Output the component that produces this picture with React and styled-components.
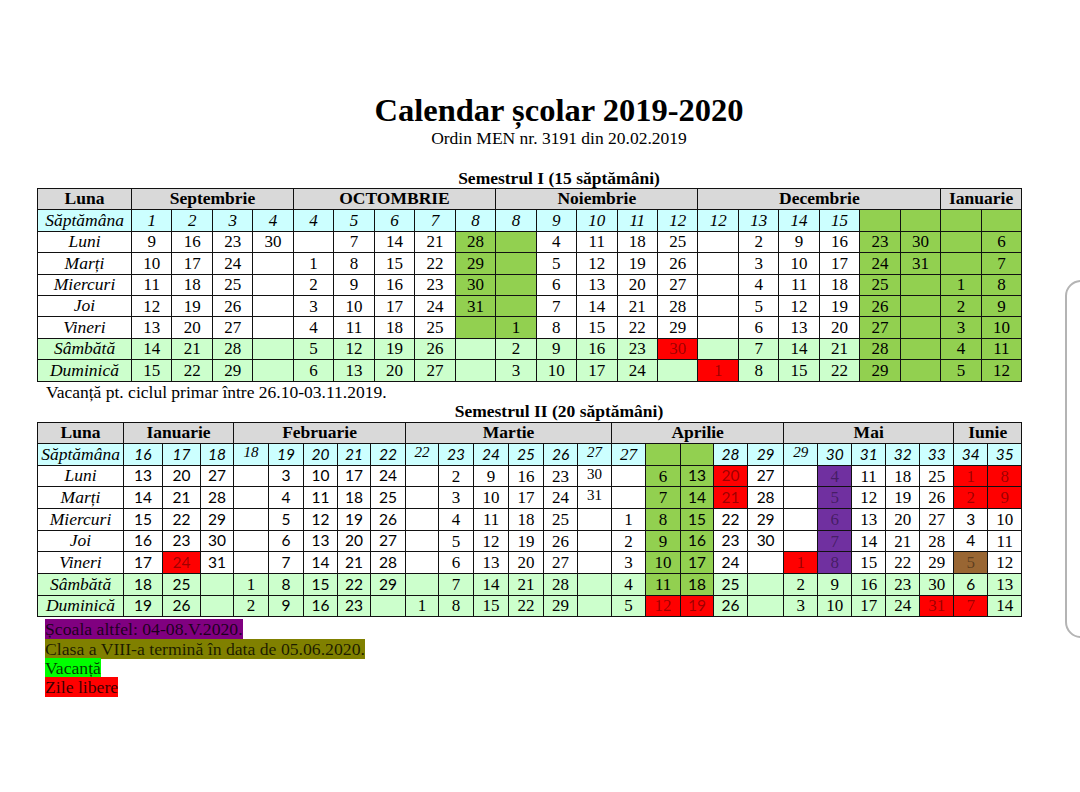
import React from "react";
import styled, { createGlobalStyle } from "styled-components";

const GREEN = "#92d050";
const RED = "#ff0000";
const PURPLE = "#7030a0";
const BROWN = "#996633";
const WEEKEND = "#ccffcc";
const CYAN = "#ccffff";
const GREY = "#d9d9d9";

const GlobalStyle = createGlobalStyle`
  html, body {
    margin: 0;
    background: #ffffff;
    overflow: hidden;
  }
  body {
    font-family: "Liberation Serif", "Times New Roman", serif;
    color: #000;
  }
`;

const Page = styled.div`
  position: relative;
  width: 1080px;
  height: 792px;
  padding: 93px 0 0 37px;
  box-sizing: border-box;
`;

const Heading = styled.div`
  width: 984px;
  padding-left: 60px;
  box-sizing: border-box;
  text-align: center;
`;

const Title = styled.h1`
  margin: 0;
  font-size: 32.5px;
  line-height: 35px;
  font-weight: bold;
`;

const Subtitle = styled.div`
  font-size: 17.5px;
  line-height: 20px;
`;

const SemesterTitle = styled.div`
  margin-top: ${(p) => p.$gap}px;
  font-size: 17.5px;
  line-height: 19px;
  font-weight: bold;
`;

const Table = styled.table`
  width: 984px;
  border-collapse: collapse;
  table-layout: fixed;
  margin-top: ${(p) => p.$gap || 0}px;
`;

const Row = styled.tr`
  height: ${(p) => p.$h}px;
`;

const Cell = styled.td`
  border: 1px solid #111;
  padding: ${(p) => (p.$top ? "1px 0 0" : "0")};
  text-align: center;
  vertical-align: ${(p) => (p.$top ? "top" : "middle")};
  background: ${(p) => p.$bg};
  color: ${(p) => (p.$dim ? "rgba(0, 0, 0, 0.4)" : "#000")};
  font-family: ${(p) =>
    p.$sans ? '"Lato", "Liberation Sans", sans-serif' : '"Liberation Serif", serif'};
  font-size: ${(p) => (p.$sans ? "15.5px" : p.$top ? "15px" : "17px")};
  font-style: ${(p) => (p.$italic ? "italic" : "normal")};
  line-height: 1;
  white-space: nowrap;
`;

const HeadCell = styled.th`
  border: 1px solid #111;
  padding: 0;
  background: ${GREY};
  font-size: 17.5px;
  font-weight: bold;
  line-height: 1;
  text-align: center;
`;

const DayCell = styled.td`
  border: 1px solid #111;
  padding: 0;
  background: ${(p) => p.$bg};
  font-size: 17.5px;
  font-style: italic;
  line-height: 1;
  text-align: center;
`;

const Note = styled.div`
  padding-left: 9px;
  font-size: 17.5px;
  line-height: 20px;
`;

const Legend = styled.div`
  margin-top: 3px;
  padding-left: 8px;
`;

const LegendLine = styled.div`
  font-size: 17.7px;
  line-height: 19.3px;
`;

const Mark = styled.span`
  background: ${(p) => p.$bg};
  color: rgba(0, 0, 0, 0.78);
`;

const ScrollEdge = styled.div`
  position: absolute;
  left: 1065px;
  top: 280px;
  width: 40px;
  height: 354px;
  border: 2px solid #b4b4b4;
  border-radius: 16px;
`;

const DAYS = ["Luni", "Marți", "Miercuri", "Joi", "Vineri", "Sâmbătă", "Duminică"];

const seq = (start, flags = "") =>
  Array.from({ length: 7 }, (_, i) => `${start + i}${flags}`);

const parse = (s) => {
  const m = s.match(/^(\d*)([a-z]*)$/);
  return { v: m[1], f: m[2] };
};

const cellBg = (f, row) => {
  if (f.includes("g")) return GREEN;
  if (f.includes("r")) return RED;
  if (f.includes("p")) return PURPLE;
  if (f.includes("b")) return BROWN;
  return row >= 5 ? WEEKEND : "#ffffff";
};

const semester1 = {
  months: [
    ["Septembrie", 4],
    ["OCTOMBRIE", 5],
    ["Noiembrie", 5],
    ["Decembrie", 6],
    ["Ianuarie", 2],
  ],
  first: 94,
  widths: Array(22).fill(890 / 22),
  rowH: 21.4,
  cols: [
    { w: "1", d: seq(9) },
    { w: "2", d: seq(16) },
    { w: "3", d: seq(23) },
    { w: "4", d: ["30", "", "", "", "", "", ""] },
    { w: "4", d: ["", "1", "2", "3", "4", "5", "6"] },
    { w: "5", d: seq(7) },
    { w: "6", d: seq(14) },
    { w: "7", d: seq(21) },
    { w: "8", d: ["28g", "29g", "30g", "31g", "g", "", ""] },
    { w: "8", d: ["g", "g", "g", "g", "1g", "2", "3"] },
    { w: "9", d: seq(4) },
    { w: "10", d: seq(11) },
    { w: "11", d: seq(18) },
    { w: "12", d: ["25", "26", "27", "28", "29", "30r", ""] },
    { w: "12", d: ["", "", "", "", "", "", "1r"] },
    { w: "13", d: seq(2) },
    { w: "14", d: seq(9) },
    { w: "15", d: seq(16) },
    { w: "g", d: seq(23, "g") },
    { w: "g", d: ["30g", "31g", "g", "g", "g", "g", "g"] },
    { w: "g", d: ["g", "g", "1g", "2g", "3g", "4g", "5g"] },
    { w: "g", d: seq(6, "g") },
  ],
};

const semester2 = {
  months: [
    ["Ianuarie", 3],
    ["Februarie", 5],
    ["Martie", 6],
    ["Aprilie", 5],
    ["Mai", 5],
    ["Iunie", 2],
  ],
  first: 86,
  widths: [39, 38, 33, 35, 35, 34, 33, 35, 33, 35, 35, 35, 34, 34, 34, 35, 33, 34, 36, 34, 34, 34, 34, 34, 34, 34],
  rowH: 21.65,
  cols: [
    { w: "16s", d: seq(13, "s") },
    { w: "17s", d: ["20s", "21s", "22s", "23s", "24rs", "25s", "26s"] },
    { w: "18s", d: ["27s", "28s", "29s", "30s", "31s", "", ""] },
    { w: "18t", d: ["", "", "", "", "", "1", "2"] },
    { w: "19s", d: seq(3, "s") },
    { w: "20s", d: seq(10, "s") },
    { w: "21s", d: seq(17, "s") },
    { w: "22s", d: ["24s", "25s", "26s", "27s", "28s", "29s", ""] },
    { w: "22t", d: ["", "", "", "", "", "", "1"] },
    { w: "23s", d: seq(2) },
    { w: "24s", d: seq(9) },
    { w: "25s", d: seq(16) },
    { w: "26s", d: seq(23) },
    { w: "27t", d: ["30t", "31t", "", "", "", "", ""] },
    { w: "27", d: ["", "", "1", "2", "3", "4", "5"] },
    { w: "g", d: ["6g", "7g", "8g", "9g", "10g", "11g", "12r"] },
    { w: "g", d: ["13gs", "14gs", "15gs", "16gs", "17gs", "18gs", "19rs"] },
    { w: "28s", d: ["20rs", "21rs", "22s", "23s", "24s", "25s", "26s"] },
    { w: "29s", d: ["27s", "28s", "29s", "30s", "", "", ""] },
    { w: "29t", d: ["", "", "", "", "1r", "2", "3"] },
    { w: "30s", d: ["4p", "5p", "6p", "7p", "8p", "9", "10"] },
    { w: "31s", d: seq(11) },
    { w: "32s", d: seq(18) },
    { w: "33s", d: ["25", "26", "27", "28", "29", "30", "31r"] },
    { w: "34s", d: ["1r", "2r", "3s", "4s", "5b", "6s", "7r"] },
    { w: "35s", d: ["8r", "9r", "10", "11", "12", "13", "14"] },
  ],
};

const SemesterTable = ({ data, gap }) => (
  <Table $gap={gap}>
    <colgroup>
      <col style={{ width: data.first }} />
      {data.widths.map((w, i) => (
        <col key={i} style={{ width: w }} />
      ))}
    </colgroup>
    <tbody>
      <Row $h={data.rowH}>
        <HeadCell>Luna</HeadCell>
        {data.months.map(([name, span]) => (
          <HeadCell key={name} colSpan={span}>
            {name}
          </HeadCell>
        ))}
      </Row>
      <Row $h={data.rowH}>
        <DayCell $bg={CYAN}>Săptămâna</DayCell>
        {data.cols.map((c, i) => {
          const { v, f } = parse(c.w);
          return (
            <Cell
              key={i}
              $italic
              $bg={f.includes("g") ? GREEN : CYAN}
              $sans={f.includes("s")}
              $top={f.includes("t")}
            >
              {v}
            </Cell>
          );
        })}
      </Row>
      {DAYS.map((day, r) => (
        <Row key={day} $h={data.rowH}>
          <DayCell $bg={r >= 5 ? WEEKEND : "#ffffff"}>{day}</DayCell>
          {data.cols.map((c, i) => {
            const { v, f } = parse(c.d[r]);
            return (
              <Cell
                key={i}
                $bg={cellBg(f, r)}
                $dim={/[rpb]/.test(f)}
                $sans={f.includes("s")}
                $top={f.includes("t")}
              >
                {v}
              </Cell>
            );
          })}
        </Row>
      ))}
    </tbody>
  </Table>
);

const App = () => (
  <>
    <GlobalStyle />
    <Page>
      <Heading>
        <Title>Calendar școlar 2019-2020</Title>
        <Subtitle>Ordin MEN nr. 3191 din 20.02.2019</Subtitle>
        <SemesterTitle $gap={21}>Semestrul I (15 săptămâni)</SemesterTitle>
      </Heading>
      <SemesterTable data={semester1} />
      <Note>Vacanță pt. ciclul primar între 26.10-03.11.2019.</Note>
      <Heading>
        <SemesterTitle $gap={0}>Semestrul II (20 săptămâni)</SemesterTitle>
      </Heading>
      <SemesterTable data={semester2} gap={1} />
      <Legend>
        <LegendLine>
          <Mark $bg="#800080">Școala altfel: 04-08.V.2020.</Mark>
        </LegendLine>
        <LegendLine>
          <Mark $bg="#808000">Clasa a VIII-a termină în data de 05.06.2020.</Mark>
        </LegendLine>
        <LegendLine>
          <Mark $bg="#00ff00">Vacanță</Mark>
        </LegendLine>
        <LegendLine>
          <Mark $bg="#ff0000">Zile libere</Mark>
        </LegendLine>
      </Legend>
      <ScrollEdge />
    </Page>
  </>
);

export default App;
